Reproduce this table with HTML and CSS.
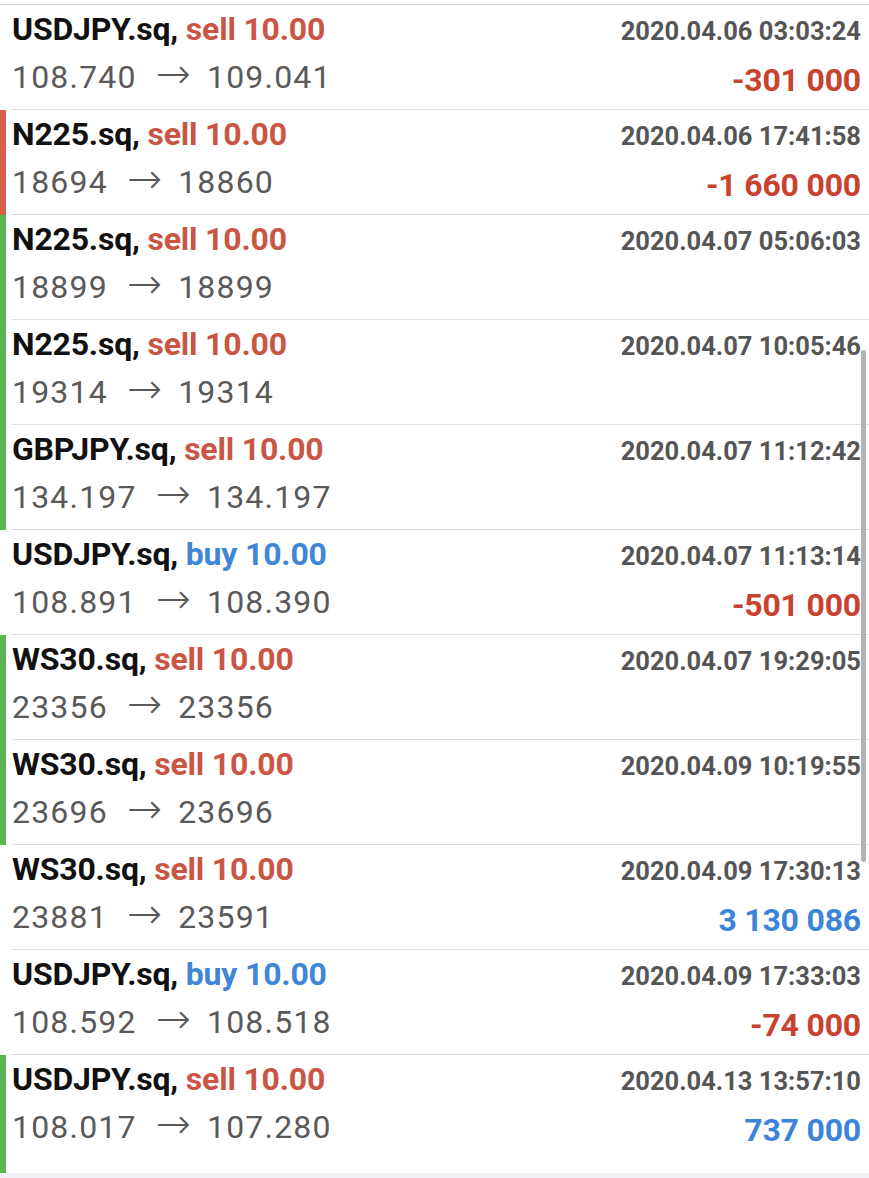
FILE: index.html
```html
<!DOCTYPE html>
<html lang="en">
<head>
<meta charset="utf-8">
<title>History</title>
<link rel="stylesheet" href="styles.css">
</head>
<body>
<div class="screen">
  <div class="list">
    <div class="item">
      <div class="bar"></div>
      <div class="content">
        <div class="left">
          <div class="title"><span class="sym">USDJPY.sq,</span> <span class="sell">sell 10.00</span></div>
          <div class="prices">108.740<span class="arrow">→</span>109.041</div>
        </div>
        <div class="right">
          <div class="date">2020.04.06 03:03:24</div>
          <div class="profit loss">-301 000</div>
        </div>
      </div>
    </div>
    <div class="item">
      <div class="bar red"></div>
      <div class="content">
        <div class="left">
          <div class="title"><span class="sym">N225.sq,</span> <span class="sell">sell 10.00</span></div>
          <div class="prices">18694<span class="arrow">→</span>18860</div>
        </div>
        <div class="right">
          <div class="date">2020.04.06 17:41:58</div>
          <div class="profit loss">-1 660 000</div>
        </div>
      </div>
    </div>
    <div class="item">
      <div class="bar green"></div>
      <div class="content">
        <div class="left">
          <div class="title"><span class="sym">N225.sq,</span> <span class="sell">sell 10.00</span></div>
          <div class="prices">18899<span class="arrow">→</span>18899</div>
        </div>
        <div class="right">
          <div class="date">2020.04.07 05:06:03</div>
          <div class="profit"></div>
        </div>
      </div>
    </div>
    <div class="item">
      <div class="bar green"></div>
      <div class="content">
        <div class="left">
          <div class="title"><span class="sym">N225.sq,</span> <span class="sell">sell 10.00</span></div>
          <div class="prices">19314<span class="arrow">→</span>19314</div>
        </div>
        <div class="right">
          <div class="date">2020.04.07 10:05:46</div>
          <div class="profit"></div>
        </div>
      </div>
    </div>
    <div class="item">
      <div class="bar green"></div>
      <div class="content">
        <div class="left">
          <div class="title"><span class="sym">GBPJPY.sq,</span> <span class="sell">sell 10.00</span></div>
          <div class="prices">134.197<span class="arrow">→</span>134.197</div>
        </div>
        <div class="right">
          <div class="date">2020.04.07 11:12:42</div>
          <div class="profit"></div>
        </div>
      </div>
    </div>
    <div class="item">
      <div class="bar"></div>
      <div class="content">
        <div class="left">
          <div class="title"><span class="sym">USDJPY.sq,</span> <span class="buy">buy 10.00</span></div>
          <div class="prices">108.891<span class="arrow">→</span>108.390</div>
        </div>
        <div class="right">
          <div class="date">2020.04.07 11:13:14</div>
          <div class="profit loss">-501 000</div>
        </div>
      </div>
    </div>
    <div class="item">
      <div class="bar green"></div>
      <div class="content">
        <div class="left">
          <div class="title"><span class="sym">WS30.sq,</span> <span class="sell">sell 10.00</span></div>
          <div class="prices">23356<span class="arrow">→</span>23356</div>
        </div>
        <div class="right">
          <div class="date">2020.04.07 19:29:05</div>
          <div class="profit"></div>
        </div>
      </div>
    </div>
    <div class="item">
      <div class="bar green"></div>
      <div class="content">
        <div class="left">
          <div class="title"><span class="sym">WS30.sq,</span> <span class="sell">sell 10.00</span></div>
          <div class="prices">23696<span class="arrow">→</span>23696</div>
        </div>
        <div class="right">
          <div class="date">2020.04.09 10:19:55</div>
          <div class="profit"></div>
        </div>
      </div>
    </div>
    <div class="item">
      <div class="bar"></div>
      <div class="content">
        <div class="left">
          <div class="title"><span class="sym">WS30.sq,</span> <span class="sell">sell 10.00</span></div>
          <div class="prices">23881<span class="arrow">→</span>23591</div>
        </div>
        <div class="right">
          <div class="date">2020.04.09 17:30:13</div>
          <div class="profit gain">3 130 086</div>
        </div>
      </div>
    </div>
    <div class="item">
      <div class="bar"></div>
      <div class="content">
        <div class="left">
          <div class="title"><span class="sym">USDJPY.sq,</span> <span class="buy">buy 10.00</span></div>
          <div class="prices">108.592<span class="arrow">→</span>108.518</div>
        </div>
        <div class="right">
          <div class="date">2020.04.09 17:33:03</div>
          <div class="profit loss">-74 000</div>
        </div>
      </div>
    </div>
    <div class="item last">
      <div class="bar green"></div>
      <div class="content">
        <div class="left">
          <div class="title"><span class="sym">USDJPY.sq,</span> <span class="sell">sell 10.00</span></div>
          <div class="prices">108.017<span class="arrow">→</span>107.280</div>
        </div>
        <div class="right">
          <div class="date">2020.04.13 13:57:10</div>
          <div class="profit gain">737 000</div>
        </div>
      </div>
    </div>
  </div>
  <div class="scrollbar"></div>
</div>
</body>
</html>
```
FILE: styles.css
```css
html, body {
  margin: 0;
  padding: 0;
  background: #eff1f4;
}

.screen {
  position: relative;
  width: 869px;
  background: #fff;
  padding-top: 4px;
}

.list {
  border-top: 1px solid #d4d6da;
  background: #fff;
}

.item {
  display: flex;
  height: 105px;
}

.item.last {
  height: 118px;
}

.bar {
  flex: none;
  width: 6px;
  margin-right: 5px;
}

.bar.red { background: #d8604b; }
.bar.green { background: #5cb553; }

.content {
  flex: 1;
  display: flex;
  justify-content: space-between;
  border-bottom: 1px solid #dddfe2;
  padding: 0 8px 0 1px;
  font-family: Roboto, "Liberation Sans", Arial, sans-serif;
}

.item.last .content {
  border-bottom: 0;
}

.left {
  padding-top: 4px;
}

.title {
  font-size: 32px;
  line-height: 40px;
  font-weight: 700;
  letter-spacing: -0.2px;
  white-space: nowrap;
}

.sym { color: #111; }
.sell { color: #c95644; }
.buy { color: #3f86d6; }

.prices {
  margin-top: 8px;
  font-size: 32px;
  line-height: 40px;
  color: #595959;
  letter-spacing: 1.2px;
  white-space: nowrap;
}

.arrow {
  font-family: "DejaVu Sans", sans-serif;
  font-weight: 200;
  font-size: 42px;
  line-height: 0;
  letter-spacing: 0;
  padding: 0 16px 0 19px;
}

.right {
  display: flex;
  flex-direction: column;
  align-items: flex-end;
  padding-top: 11px;
}

.date {
  font-size: 25.5px;
  line-height: 31px;
  font-weight: 700;
  color: #555;
  white-space: nowrap;
}

.profit {
  margin-top: 13px;
  font-size: 32px;
  line-height: 40px;
  font-weight: 700;
  letter-spacing: -0.2px;
  white-space: nowrap;
}

.profit.loss { color: #c9412f; }
.profit.gain { color: #3c84d9; }

.scrollbar {
  position: absolute;
  left: 861px;
  top: 350px;
  width: 5px;
  height: 512px;
  border-radius: 3px;
  background: #b3b3b3;
}
```
